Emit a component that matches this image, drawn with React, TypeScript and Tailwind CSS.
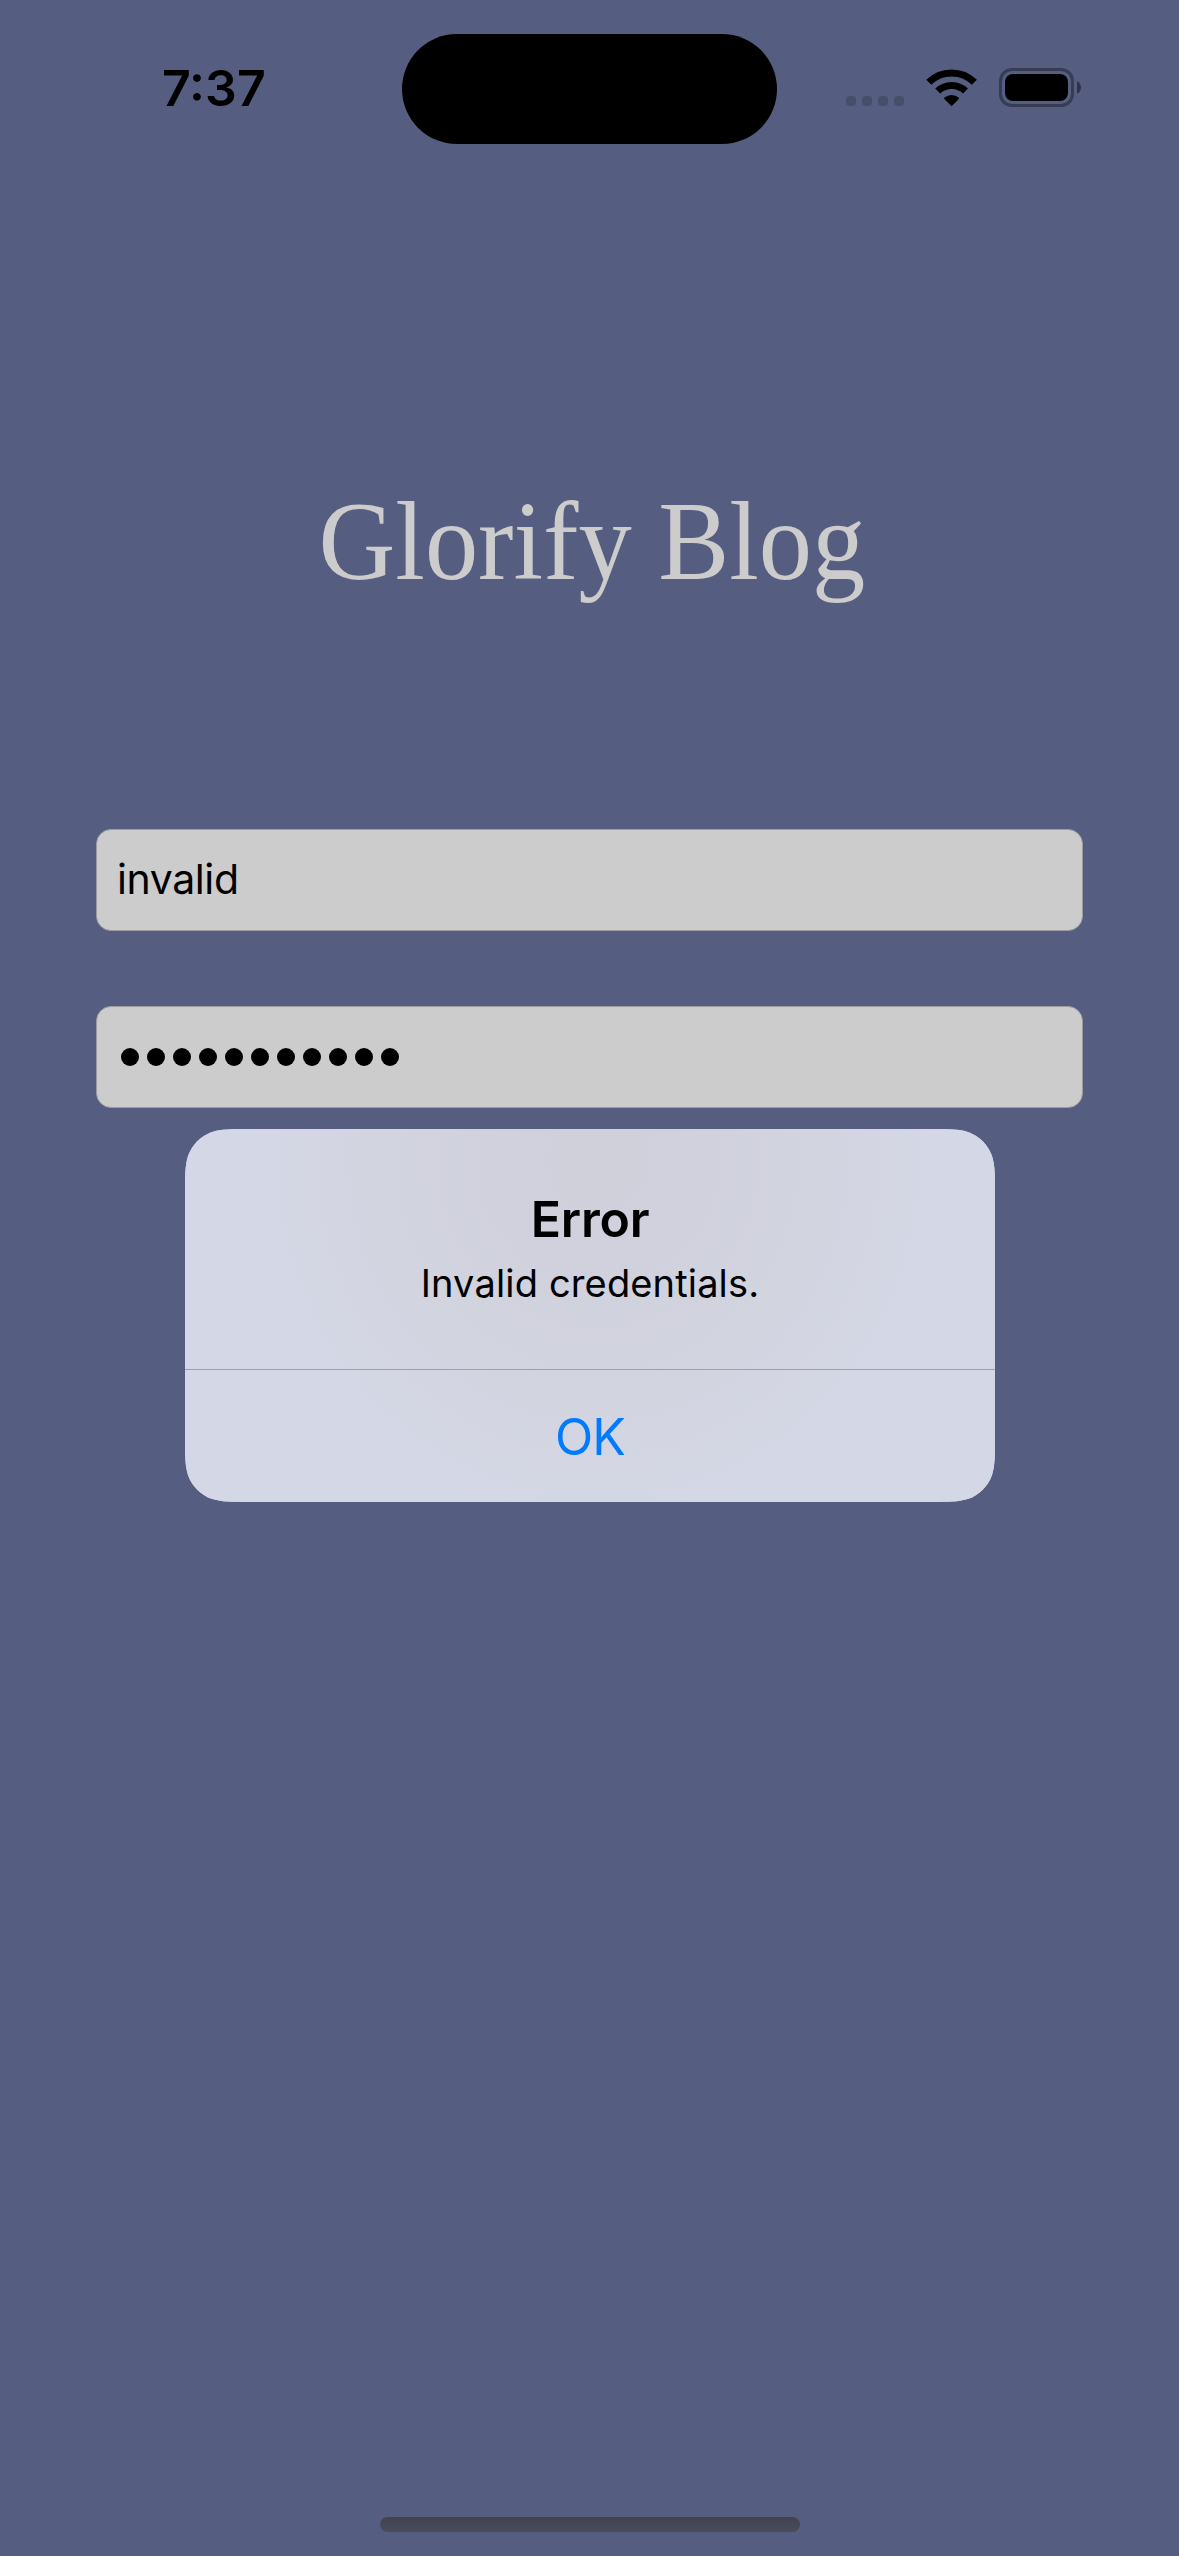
const PASSWORD_LENGTH = 11;

function StatusBar() {
  return (
    <header className="grid h-[177px] grid-cols-[402px_375px_402px] items-start">
      <div className="pt-[58px] pl-[162px] text-[50px] leading-[60px] font-semibold">
        7:37
      </div>
      <div className="mt-[34px] h-[110px] rounded-full bg-black" />
      <div className="flex pt-[68px] pl-[69px]">
        <div className="mt-7 flex gap-1.5">
          {[0, 1, 2, 3].map((dot) => (
            <span key={dot} className="size-2.5 rounded-[4px] bg-[#464e69]" />
          ))}
        </div>
        <svg className="ml-[22px] h-[39px] w-[51px]" viewBox="0 0 51 39" fill="none">
          <path d="M2.8 13.6A32.6 32.6 0 0 1 48.4 13.6" transform="translate(0 .7)" stroke="black" strokeWidth="7.2" />
          <path d="M11.7 22.4A20 20 0 0 1 39.5 22.4" transform="translate(0 .6)" stroke="black" strokeWidth="7" />
          <path d="M25.6 38.3L18.3 30.9Q17.8 30.2 18.5 29.6A11 11 0 0 1 32.7 29.6Q33.4 30.2 32.8 30.9Z" fill="black" />
        </svg>
        <svg className="ml-[22px] h-[39px] w-[83px]" viewBox="0 0 83 39" fill="none">
          <rect x="1.5" y="1.5" width="72" height="36" rx="11.5" stroke="#363c52" strokeWidth="3" />
          <rect x="6" y="6" width="63" height="27" rx="8" fill="black" />
          <path d="M78 13.2C80.3 14.3 82 16.8 82 19.5S80.3 24.7 78 25.8Z" fill="#2e3346" />
        </svg>
      </div>
    </header>
  );
}

function LoginForm() {
  return (
    <form className="flex flex-col gap-[75px] px-24">
      <div className="flex h-[102px] items-center rounded-[15px] border border-[#9c9c9f] bg-[#cccccc] pl-5 text-[41px] tracking-[-0.4px]">
        invalid
      </div>
      <div className="flex h-[102px] items-center gap-2 rounded-[15px] border border-[#9c9c9f] bg-[#cccccc] pl-6">
        {Array.from({ length: PASSWORD_LENGTH }, (_, i) => (
          <span key={i} className="size-[18px] rounded-full bg-black" />
        ))}
      </div>
    </form>
  );
}

function ErrorAlert() {
  return (
    <div
      role="alertdialog"
      className="absolute top-[1129px] left-[185px] flex h-[373px] w-[810px] flex-col bg-[#d4d7e5] bg-[radial-gradient(ellipse_340px_360px_at_51%_8%,#cfd0da_0%,#d0d1dc_30%,#d2d4e0_65%,#d4d7e5_100%)] text-center [clip-path:path('M64.2_0H745.8C764.3_0_773.5_0_783.5_3.15C794.3_7.1_802.9_15.7_806.85_26.5C810_36.5_810_45.7_810_64.2V308.8C810_327.3_810_336.5_806.85_346.5C802.9_357.3_794.3_365.9_783.5_369.85C773.5_373_764.3_373_745.8_373H64.2C45.7_373_36.5_373_26.5_369.85C15.7_365.9_7.1_357.3_3.15_346.5C0_336.5_0_327.3_0_308.8V64.2C0_45.7_0_36.5_3.15_26.5C7.1_15.7_15.7_7.1_26.5_3.15C36.5_0_45.7_0_64.2_0Z')]"
    >
      <div className="flex h-[241px] flex-col border-b border-[#9a9fb6] pt-[60px]">
        <h2 className="text-[50px] leading-[60px] font-semibold tracking-[-0.2px]">Error</h2>
        <p className="mt-[10px] text-[38px] leading-[48px] tracking-[0.15px]">Invalid credentials.</p>
      </div>
      <button className="h-[132px] pt-0.5 text-[50px] leading-[60px] tracking-[-1px] text-[#007aff]">OK</button>
    </div>
  );
}

export default function App() {
  return (
    <main className="relative flex h-[2556px] w-[1179px] flex-col overflow-hidden bg-[#555d80] font-['Inter',sans-serif] text-black">
      <StatusBar />
      <h1 className="mt-[289px] h-[363px] origin-center scale-x-[0.95] pl-[5px] text-center font-['Liberation_Serif',serif] text-[112px] leading-[150px] whitespace-nowrap text-[#cccccc]">
        Glorify Blog
      </h1>
      <LoginForm />
      <ErrorAlert />
      <div className="mx-auto mt-auto mb-6 h-[15px] w-[420px] rounded-full bg-linear-to-b from-[#41434e] to-[#484c5b]" />
    </main>
  );
}
